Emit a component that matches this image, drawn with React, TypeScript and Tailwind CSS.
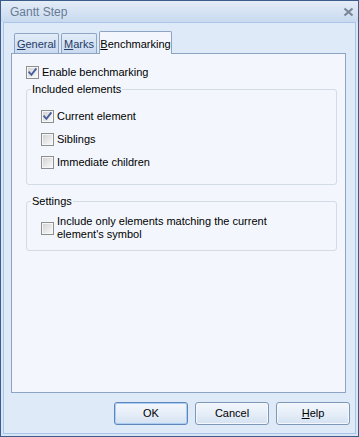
import React from "react";

const font = { fontFamily: '"Liberation Sans", Arial, sans-serif' };

function Check({ checked }: { checked?: boolean }) {
  return (
    <span className="relative flex h-[13px] w-[13px] shrink-0 border border-[#8e8f8f] bg-[#f6f6f6] p-[1px]">
      <span className="block h-full w-full bg-gradient-to-br from-[#d4d4d4] to-[#f8f8f8]" />
      {checked && (
        <svg className="absolute left-0 top-0" width="11" height="11" viewBox="0 0 11 11">
          <path d="M2.2 5.4 L4.4 7.8 L8.8 2.2" fill="none" stroke="#4b5f9f" strokeWidth="1.9" strokeLinecap="square" />
        </svg>
      )}
    </span>
  );
}

function Row({ checked, children }: { checked?: boolean; children: React.ReactNode }) {
  return (
    <div className="flex items-center gap-[2px] text-[11px] leading-[13px] text-black">
      <Check checked={checked} />
      <span className="pl-[1px]">{children}</span>
    </div>
  );
}

function Button({ children, primary }: { children: React.ReactNode; primary?: boolean }) {
  return (
    <div
      className={
        "flex h-[23px] w-[74px] items-center justify-center rounded-[3px] border bg-gradient-to-b from-[#f3f7fc] via-[#e6eef8] to-[#d5e2f2] text-[11px] text-black " +
        (primary ? "border-[#5f86bb] shadow-[inset_0_0_0_1px_#a9cdf3]" : "border-[#7f97b6] shadow-[inset_0_0_0_1px_#f4f8fd]")
      }
    >
      {children}
    </div>
  );
}

export default function App() {
  return (
    <div style={font} className="flex h-[437px] w-[359px] flex-col border border-[#3b5d89] bg-[#d9e5f5]">
      <div className="flex h-[21px] shrink-0 items-center justify-between bg-gradient-to-b from-[#e4ecf7] to-[#c8daf0] pl-[9px] pr-[4px]">
        <span className="text-[12px] text-[#687b94]">Gantt Step</span>
        <svg width="11" height="10" viewBox="0 0 11 10">
          <path d="M1.5 1.5 L9.5 8.5 M9.5 1.5 L1.5 8.5" stroke="#7a8696" strokeWidth="2.2" />
        </svg>
      </div>
      <div className="flex flex-1 flex-col px-[2px] pb-[2px]">
        <div className="flex flex-1 flex-col border border-[#a8c5ea] bg-[#dfeaf9] pl-[7px] pr-[5px] pt-[8px] pb-[8px]">
          <div className="flex h-[22px] items-end gap-[2px] pl-[3px]">
            <div className="flex h-[20px] w-[45px] justify-center rounded-t-[2px] border border-b-0 border-[#8ea4c3] bg-gradient-to-b from-[#e3ecf8] to-[#c9daf0] pt-[4px] text-[11px] leading-[13px] text-[#1f3b66]">
              <span>
                <span className="underline">G</span>eneral
              </span>
            </div>
            <div className="flex h-[20px] w-[36px] justify-center rounded-t-[2px] border border-b-0 border-[#8ea4c3] bg-gradient-to-b from-[#e3ecf8] to-[#c9daf0] pt-[4px] text-[11px] leading-[13px] text-[#1f3b66]">
              <span>
                <span className="underline">M</span>arks
              </span>
            </div>
            <div className="relative z-10 mb-[-1px] flex h-[23px] w-[73px] justify-center rounded-t-[2px] border border-b-0 border-[#8ea4c3] bg-[#f3f7fd] pt-[6px] text-[11px] leading-[13px] text-black">
              <span>
                <span className="underline">B</span>enchmarking
              </span>
            </div>
          </div>
          <div className="h-[340px] w-[335px] border border-[#8ea4c3] bg-[#f3f7fd] pl-[14px] pt-[12px]">
            <Row checked>Enable benchmarking</Row>
            <fieldset className="mt-[4px] w-[311px] rounded-[3px] border border-[#d3dbe5]">
              <legend className="ml-[4px] px-[1px] text-[11px] leading-[13px] text-black">Included elements</legend>
              <div className="flex flex-col gap-[10px] pl-[14px] pt-[14px] pb-[15px]">
                <Row checked>Current element</Row>
                <Row>Siblings</Row>
                <Row>Immediate children</Row>
              </div>
            </fieldset>
            <fieldset className="mt-[10px] w-[311px] rounded-[3px] border border-[#d3dbe5]">
              <legend className="ml-[4px] px-[1px] text-[11px] leading-[13px] text-black">Settings</legend>
              <div className="pl-[14px] pt-[7px] pb-[9px]">
                <div className="flex items-center gap-[2px] text-[11px] leading-[13px] text-black">
                  <Check />
                  <span className="w-[220px] pl-[1px]">Include only elements matching the current element's symbol</span>
                </div>
              </div>
            </fieldset>
          </div>
          <div className="mt-[9px] flex justify-end gap-[7px]">
            <Button primary>OK</Button>
            <Button>Cancel</Button>
            <Button>
              <span>
                <span className="underline">H</span>elp
              </span>
            </Button>
          </div>
        </div>
      </div>
    </div>
  );
}
